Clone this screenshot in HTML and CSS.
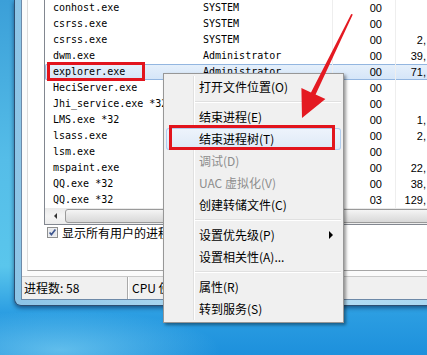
FILE: index.html
```html
<!DOCTYPE html>
<html lang="zh-CN">
<head>
    <meta charset="UTF-8">
    <meta name="viewport" content="width=device-width, initial-scale=1.0">
    <title>Windows 任务管理器 - 进程</title>
    <link rel="stylesheet" href="styles.css">
</head>
<body>
<div class="desktop">
    <div class="window">
        <div class="client">
            <div class="tabpage">
                <div class="proc-list">
                    <div class="row"><span class="c-name">conhost.exe</span><span class="c-user">SYSTEM</span><span class="c-cpu">00</span><span class="c-mem"></span></div>
                    <div class="row"><span class="c-name">csrss.exe</span><span class="c-user">SYSTEM</span><span class="c-cpu">00</span><span class="c-mem"></span></div>
                    <div class="row"><span class="c-name">csrss.exe</span><span class="c-user">SYSTEM</span><span class="c-cpu">00</span><span class="c-mem">2,</span></div>
                    <div class="row"><span class="c-name">dwm.exe</span><span class="c-user">Administrator</span><span class="c-cpu">00</span><span class="c-mem">39,</span></div>
                    <div class="row sel"><span class="c-name">explorer.exe</span><span class="c-user">Administrator</span><span class="c-cpu">00</span><span class="c-mem">71,</span></div>
                    <div class="row"><span class="c-name">HeciServer.exe</span><span class="c-user"></span><span class="c-cpu">00</span><span class="c-mem"></span></div>
                    <div class="row"><span class="c-name">Jhi_service.exe *32</span><span class="c-user"></span><span class="c-cpu">00</span><span class="c-mem"></span></div>
                    <div class="row"><span class="c-name">LMS.exe *32</span><span class="c-user"></span><span class="c-cpu">00</span><span class="c-mem">1,</span></div>
                    <div class="row"><span class="c-name">lsass.exe</span><span class="c-user"></span><span class="c-cpu">00</span><span class="c-mem">2,</span></div>
                    <div class="row"><span class="c-name">lsm.exe</span><span class="c-user"></span><span class="c-cpu">00</span><span class="c-mem"></span></div>
                    <div class="row"><span class="c-name">mspaint.exe</span><span class="c-user"></span><span class="c-cpu">00</span><span class="c-mem">22,</span></div>
                    <div class="row"><span class="c-name">QQ.exe *32</span><span class="c-user"></span><span class="c-cpu">00</span><span class="c-mem">38,</span></div>
                    <div class="row"><span class="c-name">QQ.exe *32</span><span class="c-user"></span><span class="c-cpu">03</span><span class="c-mem">129,</span></div>
                    <div class="hscroll">
                        <span class="sb-btn"><span class="tri-left"></span></span>
                        <span class="thumb"></span>
                    </div>
                </div>
                <div class="show-all">
                    <svg class="checkbox" width="11" height="11" viewBox="0 0 11 11">
                        <rect x="0.5" y="0.5" width="10" height="10" fill="#f4f4f4" stroke="#8e8f8f"/>
                        <rect x="1.5" y="1.5" width="8" height="8" fill="#e6e8ec"/>
                        <path d="M2.6 5.4 L4.4 7.6 L8.4 2.4" fill="none" stroke="#3e5790" stroke-width="1.6"/>
                    </svg>
                    <span>显示所有用户的进程</span>
                </div>
            </div>
            <div class="statusbar">
                <span class="sb-cell sb-count">进程数: 58</span>
                <span class="sb-cell">CPU 使</span>
            </div>
        </div>
    </div>

    <div class="ctx-menu">
        <div class="mi">打开文件位置(O)</div>
        <div class="sep"></div>
        <div class="mi">结束进程(E)</div>
        <div class="mi hover">结束进程树(T)</div>
        <div class="mi off">调试(D)</div>
        <div class="mi off">UAC 虚拟化(V)</div>
        <div class="mi">创建转储文件(C)</div>
        <div class="sep"></div>
        <div class="mi sub">设置优先级(P)</div>
        <div class="mi">设置相关性(A)...</div>
        <div class="sep"></div>
        <div class="mi">属性(R)</div>
        <div class="mi">转到服务(S)</div>
    </div>

    <div class="mark mark-row"></div>
    <div class="mark mark-item"></div>

    <svg class="pointer" width="427" height="355" viewBox="0 0 427 355">
        <polygon points="351.2,14 352.8,14.6 315.6,94.5 325.4,98.9 302,118 301.4,88.1 311,92.5" fill="#e41a22"/>
    </svg>
</div>
</body>
</html>
```

FILE: styles.css
```css
body {
    margin: 0;
    background-color: #2a9ae0;
    font-family: "Noto Sans CJK SC", sans-serif;
}
.desktop {
    position: relative;
    width: 427px;
    height: 355px;
    overflow: hidden;
    background:
        radial-gradient(ellipse 160px 40px at 60px 350px, rgba(150, 225, 248, 0.55), transparent),
        linear-gradient(180deg, #3b9fd8 0%, #55bde8 45%, #5ac6ec 75%, #2c9ee2 88%, #1d90dc 100%);
}
.window {
    position: absolute;
    left: 14px;
    top: 0;
    width: 480px;
    border: 1px solid #2d4f73;
    border-top: none;
    border-radius: 0 0 7px 7px;
    padding: 0 6px 5px 6px;
    background: linear-gradient(90deg, #8cc4e6, #b8e0f5 50%, #a4d3ef);
    box-shadow: 0 2px 4px rgba(0, 20, 60, 0.55);
}
.client {
    border: 1px solid #6d89a8;
    border-top: none;
    background-color: #fbfbfb;
    display: flex;
    flex-direction: column;
}
.tabpage {
    height: 271px;
    box-sizing: border-box;
    margin-left: 5px;
    border-left: 1px solid #dcdcdc;
    border-bottom: 1px solid #a6a6a6;
    background-color: #fff;
    padding-left: 16px;
}
.proc-list {
    height: 225px;
    box-sizing: border-box;
    border-left: 1px solid #828790;
    border-bottom: 1px solid #828790;
    background-color: #fff;
    overflow: hidden;
}
.row {
    display: grid;
    grid-template-columns: 150px 137px 63px 40px;
    height: 16px;
    font-family: "DejaVu Sans Mono", monospace;
    font-size: 10px;
    line-height: 16px;
    color: #000;
    white-space: nowrap;
}
.row span {
    overflow: hidden;
}
.c-name,
.c-user {
    padding-left: 8px;
}
.c-cpu,
.c-mem {
    font-family: "Liberation Sans", sans-serif;
    font-size: 11px;
    text-align: right;
    border-left: 1px solid #eeeeee;
}
.c-cpu {
    padding-right: 13px;
}
.c-mem {
    padding-right: 9px;
}
.row.sel {
    background: linear-gradient(#e6f0fb, #d4e5f8);
    box-shadow: inset 0 0 0 1px #93b6e0;
    border-radius: 2px;
}
.hscroll {
    display: flex;
    height: 16px;
    background: linear-gradient(#e9e9e9, #f4f4f4 50%, #ececec);
}
.sb-btn {
    width: 20px;
    display: flex;
    align-items: center;
    justify-content: center;
}
.tri-left {
    width: 0;
    height: 0;
    border-top: 3px solid transparent;
    border-bottom: 3px solid transparent;
    border-right: 3px solid #333;
}
.thumb {
    flex: 1;
    margin: 1px 0;
    border: 1px solid #9a9a9a;
    border-radius: 3px;
    background: linear-gradient(#f5f5f5, #e6e6e6 50%, #d8d8d8);
}
.show-all {
    display: flex;
    align-items: center;
    gap: 4px;
    margin: 2px 0 0 3px;
    height: 11px;
    font-size: 12px;
    line-height: 12px;
    color: #000;
    white-space: nowrap;
}
.checkbox {
    flex: none;
}
.statusbar {
    margin-top: 5px;
    border-top: 1px solid #c9c9c9;
    height: 22px;
    background-color: #f0f0f0;
    display: flex;
    font-size: 12px;
    line-height: 22px;
    color: #000;
    white-space: nowrap;
}
.sb-cell {
    padding-left: 4px;
}
.sb-count {
    width: 103px;
    padding-left: 2px;
    border-right: 1px solid #a9a9a9;
    box-shadow: 1px 0 0 #fff;
}
.ctx-menu {
    position: absolute;
    left: 163px;
    top: 73px;
    width: 181px;
    box-sizing: border-box;
    padding: 2px;
    border: 1px solid #979797;
    background-color: #f0f0f0;
    box-shadow: 2px 2px 3px rgba(0, 0, 0, 0.4);
    font-size: 12px;
    color: #000;
}
.ctx-menu::before {
    content: '';
    position: absolute;
    left: 29px;
    top: 2px;
    bottom: 2px;
    width: 1px;
    background-color: #e0e0e0;
    box-shadow: 1px 0 0 #fff;
}
.mi {
    position: relative;
    height: 22px;
    line-height: 22px;
    padding-left: 33px;
    white-space: nowrap;
}
.mi.off {
    color: #8d8d8d;
}
.mi.hover {
    border-radius: 3px;
    background: linear-gradient(#eef4fc, #dde8f6);
    box-shadow: inset 0 0 0 1px #b1cdee;
}
.mi.sub::after {
    content: '';
    position: absolute;
    right: 8px;
    top: 7px;
    border-top: 4px solid transparent;
    border-bottom: 4px solid transparent;
    border-left: 4px solid #000;
}
.sep {
    height: 8px;
    margin-left: 29px;
    position: relative;
}
.sep::before {
    content: '';
    position: absolute;
    left: 0;
    right: 0;
    top: 3px;
    border-top: 1px solid #e0e0e0;
    border-bottom: 1px solid #fff;
}
.mark {
    position: absolute;
    box-sizing: border-box;
    border: 3px solid #e2141d;
}
.mark-row {
    left: 47px;
    top: 62px;
    width: 98px;
    height: 19px;
}
.mark-item {
    left: 169px;
    top: 125px;
    width: 166px;
    height: 25px;
}
.pointer {
    position: absolute;
    left: 0;
    top: 0;
    pointer-events: none;
}
```
